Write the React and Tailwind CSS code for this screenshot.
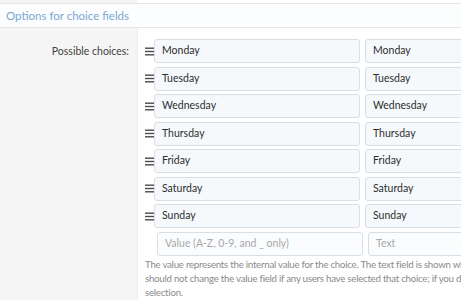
const days = ['Monday', 'Tuesday', 'Wednesday', 'Thursday', 'Friday', 'Saturday', 'Sunday'];

const Handle = () => (
  <svg width="9" height="9" viewBox="0 0 9 9" className="shrink-0 text-[#4a4a4a]">
    <rect x="0" y="0.5" width="9" height="1.4" fill="currentColor" />
    <rect x="0" y="3.8" width="9" height="1.4" fill="currentColor" />
    <rect x="0" y="7.1" width="9" height="1.4" fill="currentColor" />
  </svg>
);

const Field = ({ value, placeholder }) => (
  <div
    className={`w-[206px] h-[24px] shrink-0 rounded-[3px] border border-[#d8dee4] px-[7px] flex items-center text-[10.5px] ${
      value ? 'bg-[#f5f9fc] text-[#2d2d2d]' : 'bg-[#fafcfe] text-[#a8a8a8]'
    }`}
  >
    {value || placeholder}
  </div>
);

export default function App() {
  return (
    <div className="w-[461px] h-[300px] overflow-hidden bg-white font-['Lato',sans-serif]">
      {/* Top strip */}
      <div className="flex h-[3px]">
        <div className="w-[137px] bg-[#f4f4f4]" />
        <div className="flex-1 bg-white" />
      </div>

      {/* Section header */}
      <div className="h-[25px] border-y border-[#e6e6e6] bg-[#fcfdfe] px-[6px] flex items-center">
        <h3 className="text-[11.5px] text-[#7ba6d2] leading-none">Options for choice fields</h3>
      </div>

      {/* Form row */}
      <div className="flex">
        <div className="w-[137px] shrink-0 bg-[#f5f5f5] pt-[18px] pr-[8px] text-right text-[10.5px] text-[#424242] leading-none h-[300px]">
          Possible choices:
        </div>
        <div className="flex-1 border-l border-[#ececec] pl-[7px] pt-[11px] overflow-hidden">
          <div className="flex flex-col gap-[3.5px]">
            {days.map((d) => (
              <div key={d} className="flex items-center">
                <div className="w-[12px] flex justify-start">
                  <Handle />
                </div>
                <div className="flex gap-[5px]">
                  <Field value={d} />
                  <Field value={d} />
                </div>
              </div>
            ))}
            <div className="flex items-center pl-[12px]">
              <div className="flex gap-[5px]">
                <Field placeholder="Value (A-Z, 0-9, and _ only)" />
                <Field placeholder="Text" />
              </div>
            </div>
          </div>
          <div className="mt-[1px] text-[9.7px] leading-[14px] tracking-[-0.25px] text-[#8a8a8a] whitespace-nowrap">
            <p>The value represents the internal value for the choice. The text field is shown when</p>
            <p>should not change the value field if any users have selected that choice; if you do,</p>
            <p>selection.</p>
          </div>
        </div>
      </div>
    </div>
  );
}
